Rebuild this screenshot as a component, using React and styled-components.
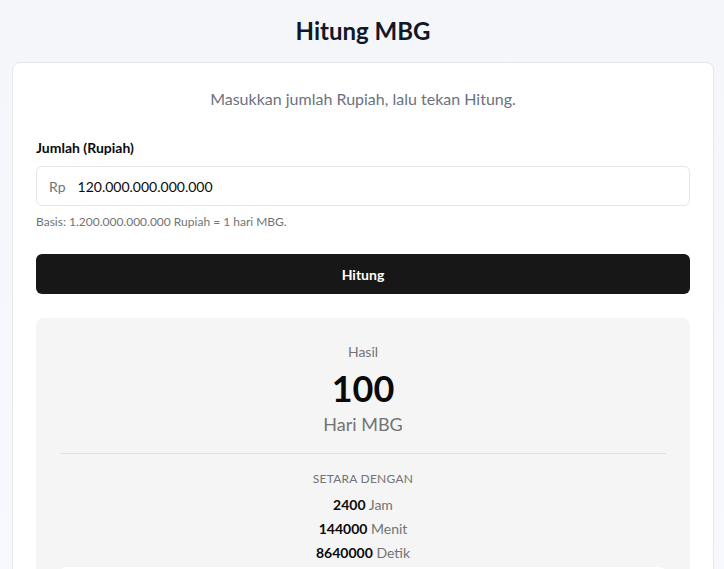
import React, { useState } from 'react';
import styled, { createGlobalStyle } from 'styled-components';

const GlobalStyle = createGlobalStyle`
    html, body {
        margin: 0;
        padding: 0;
    }
    body {
        font-family: Lato, "Noto Sans", sans-serif;
        background: linear-gradient(180deg, #f4f6fa 0%, #f8f9ff 100%);
        color: #0a0a0a;
        min-height: 100vh;
    }
`;

const Page = styled.main`
    padding: 14px 10px 0 12px;
    display: flex;
    flex-direction: column;
    align-items: stretch;
`;

const Title = styled.h1`
    margin: 0 0 15px;
    text-align: center;
    font-size: 24px;
    line-height: 33px;
    font-weight: 700;
    color: #111827;
`;

const Card = styled.section`
    background: #fff;
    border: 1px solid #e5e7eb;
    border-radius: 8px;
    padding: 24px 23px;
    display: flex;
    flex-direction: column;
`;

const Lead = styled.p`
    margin: 0 0 27px;
    text-align: center;
    font-size: 16px;
    line-height: 24px;
    color: #6b7280;
`;

const Label = styled.label`
    font-size: 14px;
    font-weight: 700;
    line-height: 20px;
    margin-bottom: 8px;
`;

const InputBox = styled.div`
    display: flex;
    align-items: center;
    height: 40px;
    box-sizing: border-box;
    border: 1px solid #e5e5e5;
    border-radius: 6px;
    padding: 0 12px;
    gap: 12px;
`;

const Prefix = styled.span`
    font-size: 14px;
    color: #737373;
`;

const Input = styled.input`
    flex: 1;
    border: none;
    outline: none;
    font: inherit;
    font-size: 14px;
    color: #0a0a0a;
    background: transparent;
    padding: 0;
`;

const Help = styled.p`
    margin: 8px 0 24px;
    font-size: 12px;
    line-height: 16px;
    color: #737373;
`;

const Button = styled.button`
    height: 40px;
    border: none;
    border-radius: 6px;
    background: #171717;
    color: #fff;
    font: inherit;
    font-size: 14px;
    font-weight: 700;
    cursor: pointer;
    margin-bottom: 24px;
`;

const Result = styled.div`
    background: #f5f5f5;
    border-radius: 8px;
    padding: 24px 24px 0;
    display: flex;
    flex-direction: column;
    align-items: center;
    text-align: center;
`;

const ResultLabel = styled.div`
    font-size: 14px;
    line-height: 20px;
    color: #737373;
`;

const BigNumber = styled.div`
    font-size: 36px;
    font-weight: 700;
    line-height: 40px;
    margin-top: 6px;
`;

const Unit = styled.div`
    font-size: 18px;
    line-height: 28px;
    color: #737373;
    margin-top: 2px;
`;

const Divider = styled.hr`
    align-self: stretch;
    border: none;
    border-top: 1px solid #e0e0e0;
    margin: 15px 0 17px;
`;

const Caption = styled.div`
    font-size: 12px;
    line-height: 16px;
    color: #737373;
    text-transform: uppercase;
    letter-spacing: 0.02em;
    margin-bottom: 6px;
`;

const Row = styled.div`
    font-size: 14px;
    line-height: 24px;
    color: #737373;

    b {
        color: #0a0a0a;
        font-weight: 700;
    }
`;

const Extra = styled.div`
    align-self: stretch;
    background: #fff;
    height: 24px;
    border-radius: 6px 6px 0 0;
    margin-top: 2px;
`;

const BASIS = 1200000000000;

export default function App() {
    const [value, setValue] = useState('120.000.000.000.000');
    const days = Number(value.replace(/\D/g, '')) / BASIS;

    return (
        <>
            <GlobalStyle />
            <Page>
                <Title>Hitung MBG</Title>
                <Card>
                    <Lead>Masukkan jumlah Rupiah, lalu tekan Hitung.</Lead>
                    <Label htmlFor="jumlah">Jumlah (Rupiah)</Label>
                    <InputBox>
                        <Prefix>Rp</Prefix>
                        <Input id="jumlah" value={value} onChange={e => setValue(e.target.value)} />
                    </InputBox>
                    <Help>Basis: 1.200.000.000.000 Rupiah = 1 hari MBG.</Help>
                    <Button type="button">Hitung</Button>
                    <Result>
                        <ResultLabel>Hasil</ResultLabel>
                        <BigNumber>{days}</BigNumber>
                        <Unit>Hari MBG</Unit>
                        <Divider />
                        <Caption>Setara dengan</Caption>
                        <Row><b>{days * 24}</b> Jam</Row>
                        <Row><b>{days * 1440}</b> Menit</Row>
                        <Row><b>{days * 86400}</b> Detik</Row>
                        <Extra />
                    </Result>
                </Card>
            </Page>
        </>
    );
}
